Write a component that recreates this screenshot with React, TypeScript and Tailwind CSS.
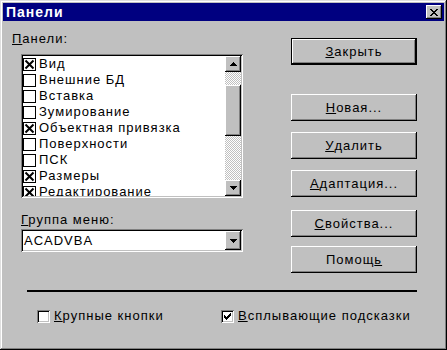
const items = [
  { label: 'Вид', on: true },
  { label: 'Внешние БД', on: false },
  { label: 'Вставка', on: false },
  { label: 'Зумирование', on: false },
  { label: 'Объектная привязка', on: true },
  { label: 'Поверхности', on: false },
  { label: 'ПСК', on: false },
  { label: 'Размеры', on: true },
  { label: 'Редактирование', on: true },
]

const raised =
  'bg-[#c0c0c0] shadow-[inset_-1px_-1px_#000,inset_1px_1px_#fff,inset_-2px_-2px_#808080]'
const sunken =
  'shadow-[inset_1px_1px_#808080,inset_-1px_-1px_#fff,inset_2px_2px_#000,inset_-2px_-2px_#c0c0c0]'

function ArrowUp() {
  return (
    <svg width="7" height="4" viewBox="0 0 7 4" shapeRendering="crispEdges">
      <path d="M3 0h1v1h1v1h1v1h1v1H0V3h1V2h1V1h1z" fill="#000" />
    </svg>
  )
}

function ArrowDown() {
  return (
    <svg width="7" height="4" viewBox="0 0 7 4" shapeRendering="crispEdges">
      <path d="M0 0h7v1H6v1H5v1H4v1H3V3H2V2H1V1H0z" fill="#000" />
    </svg>
  )
}

function ListCheck({ on }: { on: boolean }) {
  return (
    <span className="flex h-[13px] w-[13px] shrink-0 items-center justify-center border border-black bg-white">
      {on && (
        <svg width="11" height="11" viewBox="0 0 11 11">
          <path d="M1.5 1.5L9.5 9.5M9.5 1.5L1.5 9.5" stroke="#000" strokeWidth="2" />
        </svg>
      )}
    </span>
  )
}

function Check3d({ on }: { on: boolean }) {
  return (
    <span
      className={`flex h-[13px] w-[13px] shrink-0 items-center justify-center bg-white ${sunken}`}
    >
      {on && (
        <svg width="7" height="7" viewBox="0 0 7 7" shapeRendering="crispEdges">
          <path
            d="M6 0h1v3H6v1H5v1H4v1H3v1H2V6H1V5H0V2h1v1h1v1h1V3h1V2h1V1h1z"
            fill="#000"
          />
        </svg>
      )}
    </span>
  )
}

function Btn({
  children,
  className = '',
  isDefault = false,
}: {
  children: React.ReactNode
  className?: string
  isDefault?: boolean
}) {
  if (isDefault) {
    return (
      <div className={`h-[27px] w-[126px] border border-black ${className}`}>
        <div className={`flex h-full items-center justify-center ${raised}`}>{children}</div>
      </div>
    )
  }
  return (
    <div className={`flex h-[27px] w-[126px] items-center justify-center ${raised} ${className}`}>
      {children}
    </div>
  )
}

export default function App() {
  return (
    <div className="flex h-[350px] w-[447px] flex-col bg-[#c0c0c0] p-[3px] font-['Liberation_Sans',Arial,sans-serif] text-[13px] leading-4 tracking-[1px] text-black shadow-[inset_-1px_-1px_#000,inset_1px_1px_#dfdfdf,inset_-2px_-2px_#808080,inset_2px_2px_#fff]">
      {/* заголовок окна */}
      <div className="flex h-[18px] shrink-0 items-center justify-between bg-[#000080] pl-[3px] pr-[2px]">
        <span className="text-[14px] font-bold tracking-[1px] text-white">Панели</span>
        <div className={`flex h-[14px] w-[16px] items-center justify-center ${raised}`}>
          <svg width="8" height="7" viewBox="0 0 8 7" shapeRendering="crispEdges">
            <path
              d="M0 0h2v1H0zM6 0h2v1H6zM1 1h2v1H1zM5 1h2v1H5zM2 2h4v1H2zM3 3h2v1H3zM2 4h4v1H2zM1 5h2v1H1zM5 5h2v1H5zM0 6h2v1H0zM6 6h2v1H6z"
              fill="#000"
            />
          </svg>
        </div>
      </div>

      <div className="flex flex-col">
        <div className="flex">
          <div className="flex w-[240px] flex-col pl-[9px]">
            <div className="mt-[10px]">
              <span className="underline">П</span>анели:
            </div>
            <div className={`ml-[9px] mt-[7px] flex h-[144px] w-[222px] p-[2px] ${sunken}`}>
              <div className="flex-1 overflow-hidden bg-white">
                {items.map((it) => (
                  <div key={it.label} className="flex h-4 items-center gap-[3px] whitespace-nowrap">
                    <ListCheck on={it.on} />
                    <span>{it.label}</span>
                  </div>
                ))}
              </div>
              <div className="flex w-4 flex-col">
                <div className={`flex h-4 items-center justify-center ${raised}`}>
                  <ArrowUp />
                </div>
                <div className="flex flex-1 flex-col bg-[repeating-conic-gradient(#c0c0c0_0_25%,#fff_0_50%)] bg-[length:2px_2px]">
                  <div className={`mt-[13px] h-[51px] ${raised}`} />
                </div>
                <div className={`flex h-4 items-center justify-center ${raised}`}>
                  <ArrowDown />
                </div>
              </div>
            </div>

            <div className="ml-[9px] mt-[14px]">
              <span className="underline">Г</span>руппа меню:
            </div>
            <div className={`ml-[9px] mt-[1px] flex h-[23px] w-[222px] p-[2px] ${sunken}`}>
              <div className="flex flex-1 items-center bg-white pl-[1px]">ACADVBA</div>
              <div className={`flex w-4 items-center justify-center ${raised}`}>
                <ArrowDown />
              </div>
            </div>
          </div>

          <div className="ml-[48px] flex flex-col">
            <Btn isDefault className="mt-[17px]">
              <span className="underline">З</span>акрыть
            </Btn>
            <Btn className="mt-[29px]">
              <span className="underline">Н</span>овая...
            </Btn>
            <Btn className="mt-[11px]">
              <span className="underline">У</span>далить
            </Btn>
            <Btn className="mt-[11px]">
              <span className="underline">А</span>даптация...
            </Btn>
            <Btn className="mt-[13px]">
              <span className="underline">С</span>войства...
            </Btn>
            <Btn className="mt-[9px]">
              Помощ<span className="underline">ь</span>
            </Btn>
          </div>
        </div>

        <div className="ml-[24px] mt-[17px] h-[2px] w-[390px] bg-black" />

        <div className="mt-[16px] flex pl-[34px]">
          <label className="flex w-[184px] items-center gap-[4px]">
            <Check3d on={false} />
            <span>
              <span className="underline">К</span>рупные кнопки
            </span>
          </label>
          <label className="flex items-center gap-[4px]">
            <Check3d on />
            <span>
              <span className="underline">В</span>сплывающие подсказки
            </span>
          </label>
        </div>
      </div>
    </div>
  )
}
